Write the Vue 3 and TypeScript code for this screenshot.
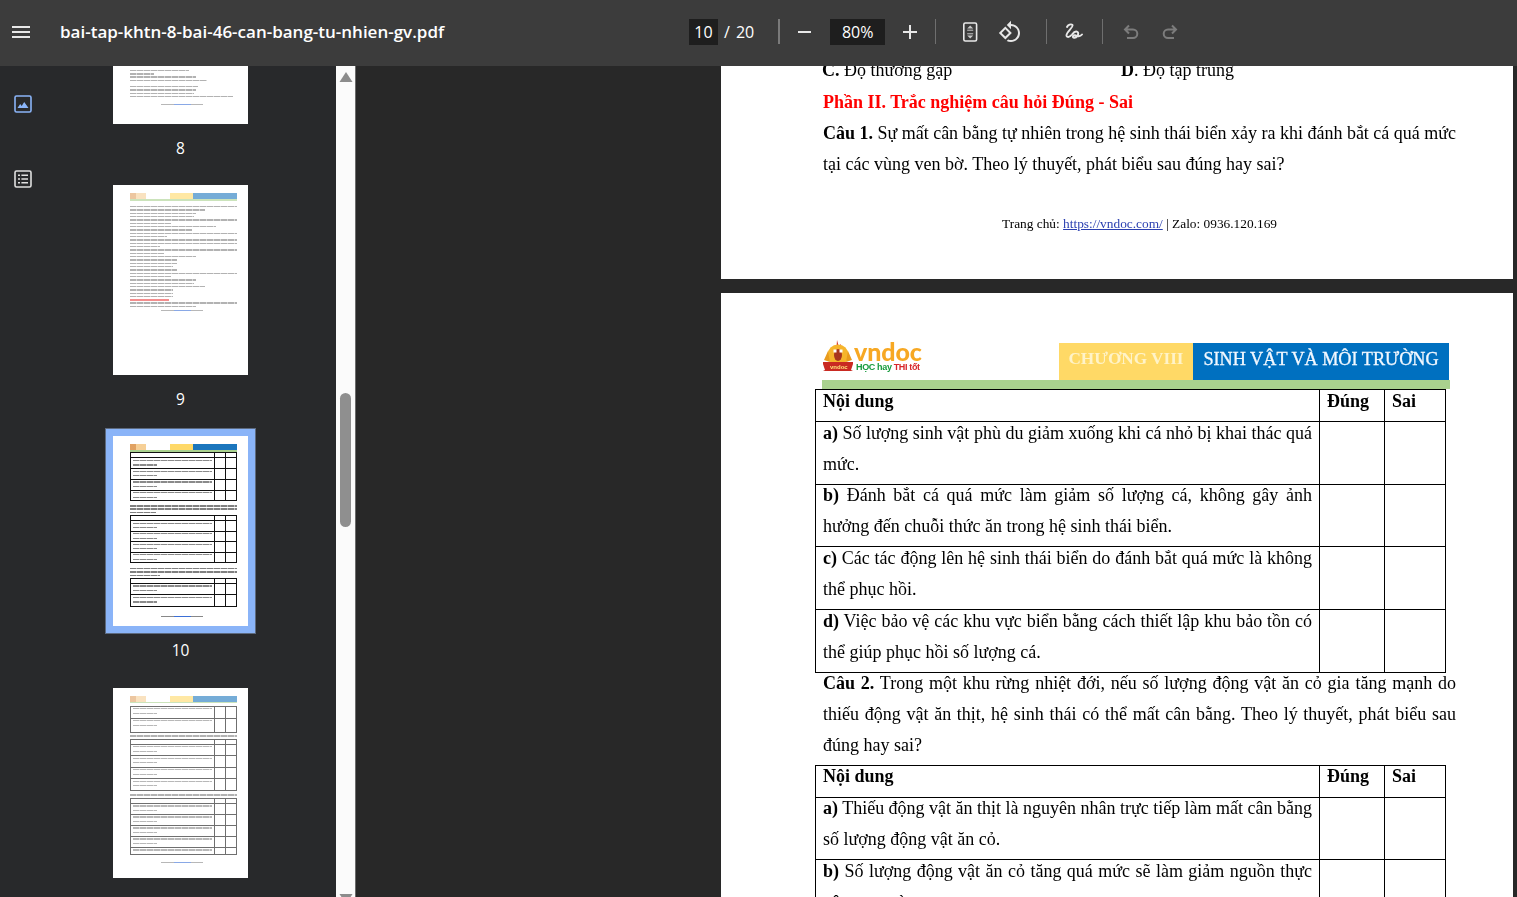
<script setup lang="ts">
type Block =
  | { k: 'line'; w: number; red?: boolean }
  | { k: 'foot' }
  | { k: 'gap'; h: number }
  | { k: 'table'; rows: number[] }

interface Thumb {
  n: number
  h: number
  top: number
  header: boolean
  label: boolean
  selected?: boolean
  blocks: Block[]
}

const L = (w: number): Block => ({ k: 'line', w })
const lines = (...ws: number[]): Block[] => ws.map(L)

const thumbs: Thumb[] = [
  {
    n: 8,
    h: 58,
    top: 2,
    header: false,
    label: true,
    blocks: [...lines(55, 22, 62), { k: 'line', w: 72 }, { k: 'gap', h: 1 }, ...lines(64, 62, 60, 96), { k: 'gap', h: 5 }, { k: 'foot' }],
  },
  {
    n: 9,
    h: 190,
    top: 8,
    header: true,
    label: true,
    blocks: [
      { k: 'gap', h: 3 },
      ...lines(100, 70, 62, 60, 100, 38, 80, 58, 100, 35, 100, 100, 28, 100, 32, 62, 44, 44, 40, 44, 100, 38, 62, 60, 70, 40, 40, 40),
      { k: 'line', w: 36, red: true },
      ...lines(100, 62),
      { k: 'gap', h: 1 },
      { k: 'foot' },
    ],
  },
  {
    n: 10,
    h: 190,
    top: 8,
    header: true,
    label: true,
    selected: true,
    blocks: [
      { k: 'table', rows: [5, 10.75, 10.75, 10.75, 10.75] },
      { k: 'gap', h: 2 },
      ...lines(100, 100, 24),
      { k: 'table', rows: [5, 10.5, 10.5, 10.5, 10.5] },
      { k: 'gap', h: 3 },
      ...lines(100, 100, 28),
      { k: 'table', rows: [5, 11.5, 11.5] },
      { k: 'gap', h: 9 },
      { k: 'foot' },
    ],
  },
  {
    n: 11,
    h: 190,
    top: 8,
    header: true,
    label: false,
    blocks: [
      { k: 'gap', h: 2 },
      { k: 'table', rows: [12, 14] },
      { k: 'gap', h: 1 },
      ...lines(100),
      { k: 'table', rows: [5, 11.5, 11.5, 11.5, 11.5] },
      { k: 'gap', h: 2 },
      ...lines(100),
      { k: 'table', rows: [5, 11, 11, 11, 11, 7] },
      { k: 'gap', h: 7 },
      { k: 'foot' },
    ],
  },
]

interface Row {
  id: string
  label: string
  first: string
  last: string
}

const table1: Row[] = [
  { id: 'a', label: 'a)', first: 'Số lượng sinh vật phù du giảm xuống khi cá nhỏ bị khai thác quá', last: 'mức.' },
  { id: 'b', label: 'b)', first: 'Đánh bắt cá quá mức làm giảm số lượng cá, không gây ảnh', last: 'hưởng đến chuỗi thức ăn trong hệ sinh thái biển.' },
  { id: 'c', label: 'c)', first: 'Các tác động lên hệ sinh thái biển do đánh bắt quá mức là không', last: 'thể phục hồi.' },
  { id: 'd', label: 'd)', first: 'Việc bảo vệ các khu vực biển bằng cách thiết lập khu bảo tồn có', last: 'thể giúp phục hồi số lượng cá.' },
]

const table2: Row[] = [
  { id: 'a', label: 'a)', first: 'Thiếu động vật ăn thịt là nguyên nhân trực tiếp làm mất cân bằng', last: 'số lượng động vật ăn cỏ.' },
  { id: 'b', label: 'b)', first: 'Số lượng động vật ăn cỏ tăng quá mức sẽ làm giảm nguồn thực', last: 'vật trong rừng.' },
]

const tables = [table1, table2]
</script>

<template>
  <div class="app">
    <header class="topbar">
      <div class="tb-left">
        <svg class="ic menu" viewBox="0 0 24 24" width="24" height="24"><path fill="#e8e8e8" d="M3 18h18v-2H3v2zm0-5h18v-2H3v2zm0-7v2h18V6H3z" /></svg>
        <span class="title">bai-tap-khtn-8-bai-46-can-bang-tu-nhien-gv.pdf</span>
      </div>
      <span class="numbox pagebox">10</span>
      <span class="slash">/</span>
      <span class="total">20</span>
      <i class="sep sep-thick"></i>
      <svg class="ic minus" viewBox="0 0 14 14" width="14" height="14"><rect x="0" y="6" width="13" height="2" fill="#e8e8e8" /></svg>
      <span class="numbox zoombox">80%</span>
      <svg class="ic plus" viewBox="0 0 14 14" width="14" height="14"><path fill="#e8e8e8" d="M6 0h2v6h6v2H8v6H6V8H0V6h6z" /></svg>
      <i class="sep sep-a"></i>
      <svg class="ic fit" viewBox="0 0 16 20" width="16" height="20">
        <rect x="0.8" y="1" width="12.8" height="18" rx="1.5" fill="none" stroke="#e8e8e8" stroke-width="1.6" />
        <path fill="#c8c8c8" d="M7.200 3.600 10.200 6.600H4.200zM7.200 16.400 4.200 13.400h6z" />
        <path stroke="#c8c8c8" stroke-width="1" d="M4.200 8.200h6M4.200 11.800h6" />
      </svg>
      <svg class="ic rotate" viewBox="0 0 24 24" width="24" height="24"><path fill="#e8e8e8" d="M7.34 6.41L.86 12.9l6.49 6.48 6.49-6.48-6.5-6.49zM3.69 12.9l3.66-3.66L11 12.9l-3.66 3.66-3.65-3.66zm15.67-6.26C17.61 4.88 15.3 4 13 4V.76L8.76 5 13 9.24V6c1.79 0 3.58.68 4.95 2.05 2.73 2.73 2.73 7.17 0 9.9C16.58 19.32 14.79 20 13 20c-.97 0-1.94-.21-2.84-.61l-1.49 1.49C10.02 21.62 11.51 22 13 22c2.3 0 4.61-.88 6.36-2.64 3.52-3.51 3.52-9.21 0-12.72z" /></svg>
      <i class="sep sep-b"></i>
      <svg class="ic ink" viewBox="0 0 18 18" width="18" height="18">
        <path fill="none" stroke="#e8e8e8" stroke-width="1.9" stroke-linecap="round" stroke-linejoin="round" d="M2 4C3 2 6 .5 7.5 2 9 4 1 9 1.5 12.5 2 15 5 14 7 11.5 8.5 9.5 10.5 7.5 12.5 9c2 2-1 6.500-4 5.500C7 14 8.500 11.500 11 12.500c2 1 4 1.500 6-1" />
      </svg>
      <i class="sep sep-c"></i>
      <svg class="ic undo" viewBox="0 0 16 16" width="16" height="16">
        <path fill="none" stroke="#7c7c7c" stroke-width="2" d="M6 1.5 2 5.500l4 4M2 5.500h8a4.300 4.300 0 0 1 0 8.600H4" />
      </svg>
      <svg class="ic redo" viewBox="0 0 16 16" width="16" height="16">
        <path fill="none" stroke="#7c7c7c" stroke-width="2" d="M10 1.500l4 4-4 4M14 5.500H6a4.300 4.300 0 0 0 0 8.600h6" />
      </svg>
    </header>

    <div class="body">
      <nav class="rail">
        <svg class="rail-ic rail-a" viewBox="0 0 18 18" width="18" height="18">
          <rect x="1" y="1" width="16" height="16" rx="1.5" fill="none" stroke="#8ab4f8" stroke-width="1.6" />
          <path fill="#8ab4f8" d="M3.500 13 6.200 9l1.500 2 2.500-4L14.500 13z" />
        </svg>
        <svg class="rail-ic rail-b" viewBox="0 0 18 18" width="18" height="18">
          <rect x="1" y="1" width="16" height="16" rx="1.500" fill="none" stroke="#e0e0e0" stroke-width="1.6" />
          <path fill="#e0e0e0" d="M4 4.500h2v1.600H4zM7.400 4.500H14v1.600H7.400zM4 8.200h2v1.600H4zM7.400 8.200H14v1.600H7.400zM4 11.900h2v1.600H4zM7.400 11.900H14v1.600H7.400z" />
        </svg>
      </nav>

      <aside class="thumbs">
        <div v-for="t in thumbs" :key="t.n" class="titem">
          <div class="thumb" :class="{ selected: t.selected }" :style="{ height: t.h + 'px', paddingTop: t.top + 'px' }">
            <div class="tinner">
              <div v-if="t.header" class="thead">
                <span class="tlogo"></span>
                <span class="tyellow"></span>
                <span class="tblue"></span>
              </div>
              <div v-if="t.header" class="tgreen"></div>
              <template v-for="(b, i) in t.blocks" :key="i">
                <div v-if="b.k === 'line'" class="tline" :class="{ red: b.red }" :style="{ width: b.w + '%' }"></div>
                <div v-else-if="b.k === 'gap'" :style="{ height: b.h + 'px' }"></div>
                <div v-else-if="b.k === 'foot'" class="tfoot"></div>
                <div v-else class="ttable">
                  <div v-for="(h, r) in b.rows" :key="r" class="ttr" :style="{ height: h + 'px' }">
                    <div class="ttd main"><i v-if="h > 6" class="tcell-line"></i><i v-if="h > 8" class="tcell-line short"></i></div>
                    <div class="ttd"></div>
                    <div class="ttd"></div>
                  </div>
                </div>
              </template>
            </div>
          </div>
          <div class="tlabel"><template v-if="t.label">{{ t.n }}</template></div>
        </div>
      </aside>

      <div class="sbar">
        <svg class="sb-up" viewBox="0 0 14 10" width="14" height="10"><path fill="#8c8c8c" d="M7 0l6.500 10H.5z" /></svg>
        <div class="sb-thumb"></div>
        <svg class="sb-down" viewBox="0 0 14 10" width="14" height="10"><path fill="#8c8c8c" d="M.5 0h13L7 10z" /></svg>
      </div>

      <main class="viewer">
        <section class="page page-one">
          <div class="two-col first">
            <span class="col"><b>C.</b> Độ thường gặp</span>
            <span class="col"><b>D</b>. Độ tập trung</span>
          </div>
          <p class="para red-h"><b>Phần II. Trắc nghiệm câu hỏi Đúng - Sai</b></p>
          <p class="para">
            <span class="lj"><b>Câu 1.</b> Sự mất cân bằng tự nhiên trong hệ sinh thái biển xảy ra khi đánh bắt cá quá mức</span>
            <span class="ll">tại các vùng ven bờ. Theo lý thuyết, phát biểu sau đúng hay sai?</span>
          </p>
          <p class="foot">Trang chủ: <a>https://vndoc.com/</a> | Zalo: 0936.120.169</p>
        </section>

        <section class="page page-two">
          <div class="doc-head">
            <div class="logo">
              <svg class="chick" viewBox="0 0 30 33" width="30" height="33">
                <path fill="#d8362a" d="M14 0l1.600 6 2.400-2-1 5h-4l-1-4 1.600 1z" />
                <ellipse cx="15" cy="15" rx="10.500" ry="10.500" fill="#f6b52c" />
                <path fill="#e99b1c" d="M5 11 1 20l6 2zM25 11l4 9-6 2z" />
                <ellipse cx="15" cy="15" rx="4" ry="6" fill="#a8361e" />
                <path fill="#fff" d="M10.500 9.500h3v3h-3zM16.500 9.500h3v3h-3z" />
                <path fill="#c92a22" d="M0 22h30v2l-2 6 2 1H0l2-1-2-6z" />
              </svg>
              <span class="chick-text">vndoc</span>
              <div class="logo-text">
                <span class="brand">vndoc</span>
                <span class="slogan"><span class="g">HỌC hay</span> <span class="r">THI tốt</span></span>
              </div>
            </div>
            <div class="chapter">CHƯƠNG VIII</div>
            <div class="chapter-name">SINH VẬT VÀ MÔI TRƯỜNG</div>
          </div>
          <div class="green-bar"></div>

          <table class="qt first-table">
            <colgroup><col class="c1" /><col class="c2" /><col class="c3" /></colgroup>
            <tbody>
              <tr class="hd"><td><div class="cell"><b>Nội dung</b></div></td><td><div class="cell"><b>Đúng</b></div></td><td><div class="cell"><b>Sai</b></div></td></tr>
              <tr v-for="r in tables[0]" :key="r.id" class="rw">
                <td><div class="cell"><span class="lj"><b>{{ r.label }}</b> {{ r.first }}</span><span class="ll">{{ r.last }}</span></div></td><td></td><td></td>
              </tr>
            </tbody>
          </table>

          <p class="para cau2">
            <span class="lj"><b>Câu 2.</b> Trong một khu rừng nhiệt đới, nếu số lượng động vật ăn cỏ gia tăng mạnh do</span>
            <span class="lj">thiếu động vật ăn thịt, hệ sinh thái có thể mất cân bằng. Theo lý thuyết, phát biểu sau</span>
            <span class="ll">đúng hay sai?</span>
          </p>

          <table class="qt second-table">
            <colgroup><col class="c1" /><col class="c2" /><col class="c3" /></colgroup>
            <tbody>
              <tr class="hd"><td><div class="cell"><b>Nội dung</b></div></td><td><div class="cell"><b>Đúng</b></div></td><td><div class="cell"><b>Sai</b></div></td></tr>
              <tr v-for="r in tables[1]" :key="r.id" class="rw">
                <td><div class="cell"><span class="lj"><b>{{ r.label }}</b> {{ r.first }}</span><span class="ll">{{ r.last }}</span></div></td><td></td><td></td>
              </tr>
            </tbody>
          </table>
        </section>
      </main>
    </div>
  </div>
</template>

<style>
html, body { margin: 0; background: #282828; }
</style>

<style scoped>
.app {
  width: 1517px;
  height: 897px;
  overflow: hidden;
  display: flex;
  flex-direction: column;
  font-family: "Open Sans", "Noto Sans", sans-serif;
  color: #fff;
}
.topbar {
  flex: 0 0 66px;
  height: 66px;
  background: #3c3c3c;
  display: flex;
  align-items: center;
  box-sizing: border-box;
  padding-bottom: 3px;
}
.ic { flex: none; display: block; }
.tb-left { flex: 0 0 689px; display: flex; align-items: center; padding-left: 9px; box-sizing: border-box; }
.title { margin-left: 27px; font-size: 17px; font-weight: 600; white-space: nowrap; color: #fff; }
.numbox {
  background: #1e1e1e;
  height: 26px;
  line-height: 26px;
  text-align: center;
  font-size: 16px;
  flex: none;
}
.pagebox { width: 29px; }
.slash { margin-left: 6px; font-size: 16px; }
.total { margin-left: 6px; font-size: 16px; }
.sep { display: block; flex: none; width: 1px; height: 25px; background: #6f6f6f; }
.sep-thick { width: 2px; margin-left: 24px; background: #7a7a7a; }
.minus { margin-left: 18px; }
.zoombox { width: 55px; margin-left: 18px; }
.plus { margin-left: 18px; }
.sep-a { margin-left: 18px; }
.fit { margin-left: 27px; }
.rotate { margin-left: 19px; }
.sep-b { margin-left: 24px; }
.ink { margin-left: 18px; }
.sep-c { margin-left: 19px; }
.undo { margin-left: 20px; }
.redo { margin-left: 23px; }

.body { flex: 1; display: flex; min-height: 0; }
.rail {
  flex: 0 0 46px;
  background: #28292b;
  display: flex;
  flex-direction: column;
  align-items: center;
}
.rail-ic { display: block; }
.rail-a { margin-top: 29px; }
.rail-b { margin-top: 57px; }

.thumbs {
  flex: 0 0 290px;
  box-sizing: border-box;
  padding-right: 21px;
  background: #28292b;
  display: flex;
  flex-direction: column;
  align-items: center;
  overflow: hidden;
}
.titem { display: flex; flex-direction: column; align-items: center; flex: none; }
.thumb {
  width: 135px;
  background: #fff;
  box-sizing: border-box;
  padding: 0 11px 0 17px;
}
.thumb.selected { box-shadow: 0 0 0 7px #8ab4f8, 0 0 0 8px #5d6a7f; }
.tinner { filter: blur(0.6px); opacity: 0.6; }
.thumb.selected .tinner { filter: blur(0.5px); opacity: 1; }
.thead { display: flex; height: 6px; }
.tlogo {
  width: 16px;
  margin-right: 24px;
  background: linear-gradient(90deg, #d98a3a 0 35%, #f4c47c 35% 100%);
  opacity: .8;
}
.tyellow { width: 23px; background: #ffd968; }
.tblue { width: 44px; background: #1b76bd; }
.tgreen { height: 1.6px; background: #a9d18e; margin: 0 0 0.4px; }
.tline {
  height: 1.4px;
  margin: 1.8px 0 1.95px;
  background: repeating-linear-gradient(90deg, #808080 0 6px, #c0c0c0 6px 7px);
}
.tline.red { background: #ee4444; }
.tfoot {
  height: 1.2px;
  width: 42px;
  margin: 0 0 0 31px;
  background: linear-gradient(90deg, #888 0 30%, #3b6fd6 30% 72%, #888 72%);
}
.ttable { border-bottom: 1.2px solid #111; border-left: 1.2px solid #111; border-right: 1.2px solid #111; }
.ttr { display: flex; border-top: 1.2px solid #111; box-sizing: border-box; }
.ttd { flex: 0 0 11px; border-left: 1.2px solid #111; box-sizing: border-box; }
.ttd.main { flex: 1; border-left: 0; padding: 1.5px 2px; display: flex; flex-direction: column; gap: 3.2px; min-width: 0; }
.tcell-line { display: block; height: 1.3px; background: repeating-linear-gradient(90deg, #8a8a8a 0 6px, #c0c0c0 6px 7px); }
.tcell-line.short { width: 30%; }
.tlabel {
  height: 61.2px;
  box-sizing: border-box;
  padding-top: 13px;
  font-size: 15.5px;
  line-height: 22px;
  text-align: center;
  color: #fff;
}

.sbar {
  flex: 0 0 20px;
  width: 20px;
  box-sizing: border-box;
  background: #fbfbfb;
  border-right: 1px solid #6b6b6b;
  display: flex;
  flex-direction: column;
  align-items: center;
}
.sb-up { display: block; flex: none; margin-top: 6px; }
.sb-thumb { flex: none; width: 11px; height: 134px; margin-top: 311px; border-radius: 6px; background: #8f8f8f; }
.sb-down { display: block; flex: none; margin-top: 367px; }

.viewer {
  flex: 1;
  min-width: 0;
  background: #282828;
  padding-left: 365px;
  overflow: hidden;
}
.page {
  width: 792px;
  background: #fff;
  color: #000;
  font-family: "Liberation Serif", "Times New Roman", serif;
  font-size: 18px;
  line-height: 31.3px;
  overflow: hidden;
  box-sizing: border-box;
  filter: blur(0.2px);
}
.page-one { height: 213px; }
.page-two { margin-top: 14px; height: 620px; padding-left: 94px; }
.two-col { display: flex; padding-left: 101px; }
.two-col.first { margin-top: -11px; }
.col { flex: 0 0 299px; }
.para { margin: 0 0 0 102px; width: 633px; }
.lj {
  display: block;
  white-space: nowrap;
  text-align: justify;
  text-align-last: justify;
  word-spacing: -0.65px;
}
.ll { display: block; white-space: nowrap; }
.red-h { color: #ff0000; height: 31.3px; padding-top: 1px; box-sizing: border-box; }
.foot {
  margin: 36px 0 0;
  padding-left: 281px;
  font-size: 13.35px;
  line-height: 16px;
}
.foot a { color: #2a3fb0; text-decoration: underline; }

.doc-head {
  display: flex;
  align-items: flex-end;
  height: 40px;
  margin: 47px 0 0 8px;
  width: 627px;
}
.logo { flex: 0 0 236px; height: 40px; display: flex; align-items: flex-start; position: relative; }
.chick { margin-top: 0; flex: none; }
.chick-text {
  position: absolute;
  left: 7px;
  top: 23.5px;
  font-family: "Liberation Sans", sans-serif;
  font-size: 6px;
  line-height: 7px;
  font-weight: 700;
  color: #ffe27a;
}
.logo-text { display: flex; flex-direction: column; margin-left: 1px; }
.brand {
  font-family: "Lato", "Open Sans", sans-serif;
  font-weight: 900;
  font-size: 25px;
  line-height: 22px;
  letter-spacing: -0.1px;
  color: #f7a823;
}
.slogan {
  font-family: "Liberation Sans", sans-serif;
  font-weight: 700;
  font-size: 9px;
  line-height: 10px;
  margin-left: 2px;
  letter-spacing: -0.35px;
  white-space: nowrap;
}
.slogan .g { color: #159a3c; }
.slogan .r { color: #d7262a; }
.chapter, .chapter-name {
  height: 37px;
  line-height: 32px;
  font-family: "Liberation Serif", serif;
  text-align: center;
  white-space: nowrap;
  box-sizing: border-box;
}
.chapter { flex: 0 0 134px; background: #ffd966; color: #fff3c8; font-weight: 700; font-size: 17.2px; }
.chapter-name { flex: 0 0 256px; background: #0070c0; color: #f2f8ff; font-weight: 400; font-size: 18.2px; -webkit-text-stroke: 0.3px #f2f8ff; }
.green-bar { height: 9px; width: 628px; margin-left: 7px; background: #a9d18e; }
.qt {
  width: 630px;
  table-layout: fixed;
  border-collapse: collapse;
}
.qt td { border: 1px solid #000; padding: 0 7px 0 7px; vertical-align: top; }
.c1 { width: 504px; }
.c2 { width: 65px; }
.c3 { width: 61px; }
.hd { height: 32px; }
.rw { height: 62.7px; }
.cell { margin-top: -4.5px; }
.cau2 { margin-top: -5px; margin-left: 8px; }
.second-table { margin-top: 3px; }
</style>
